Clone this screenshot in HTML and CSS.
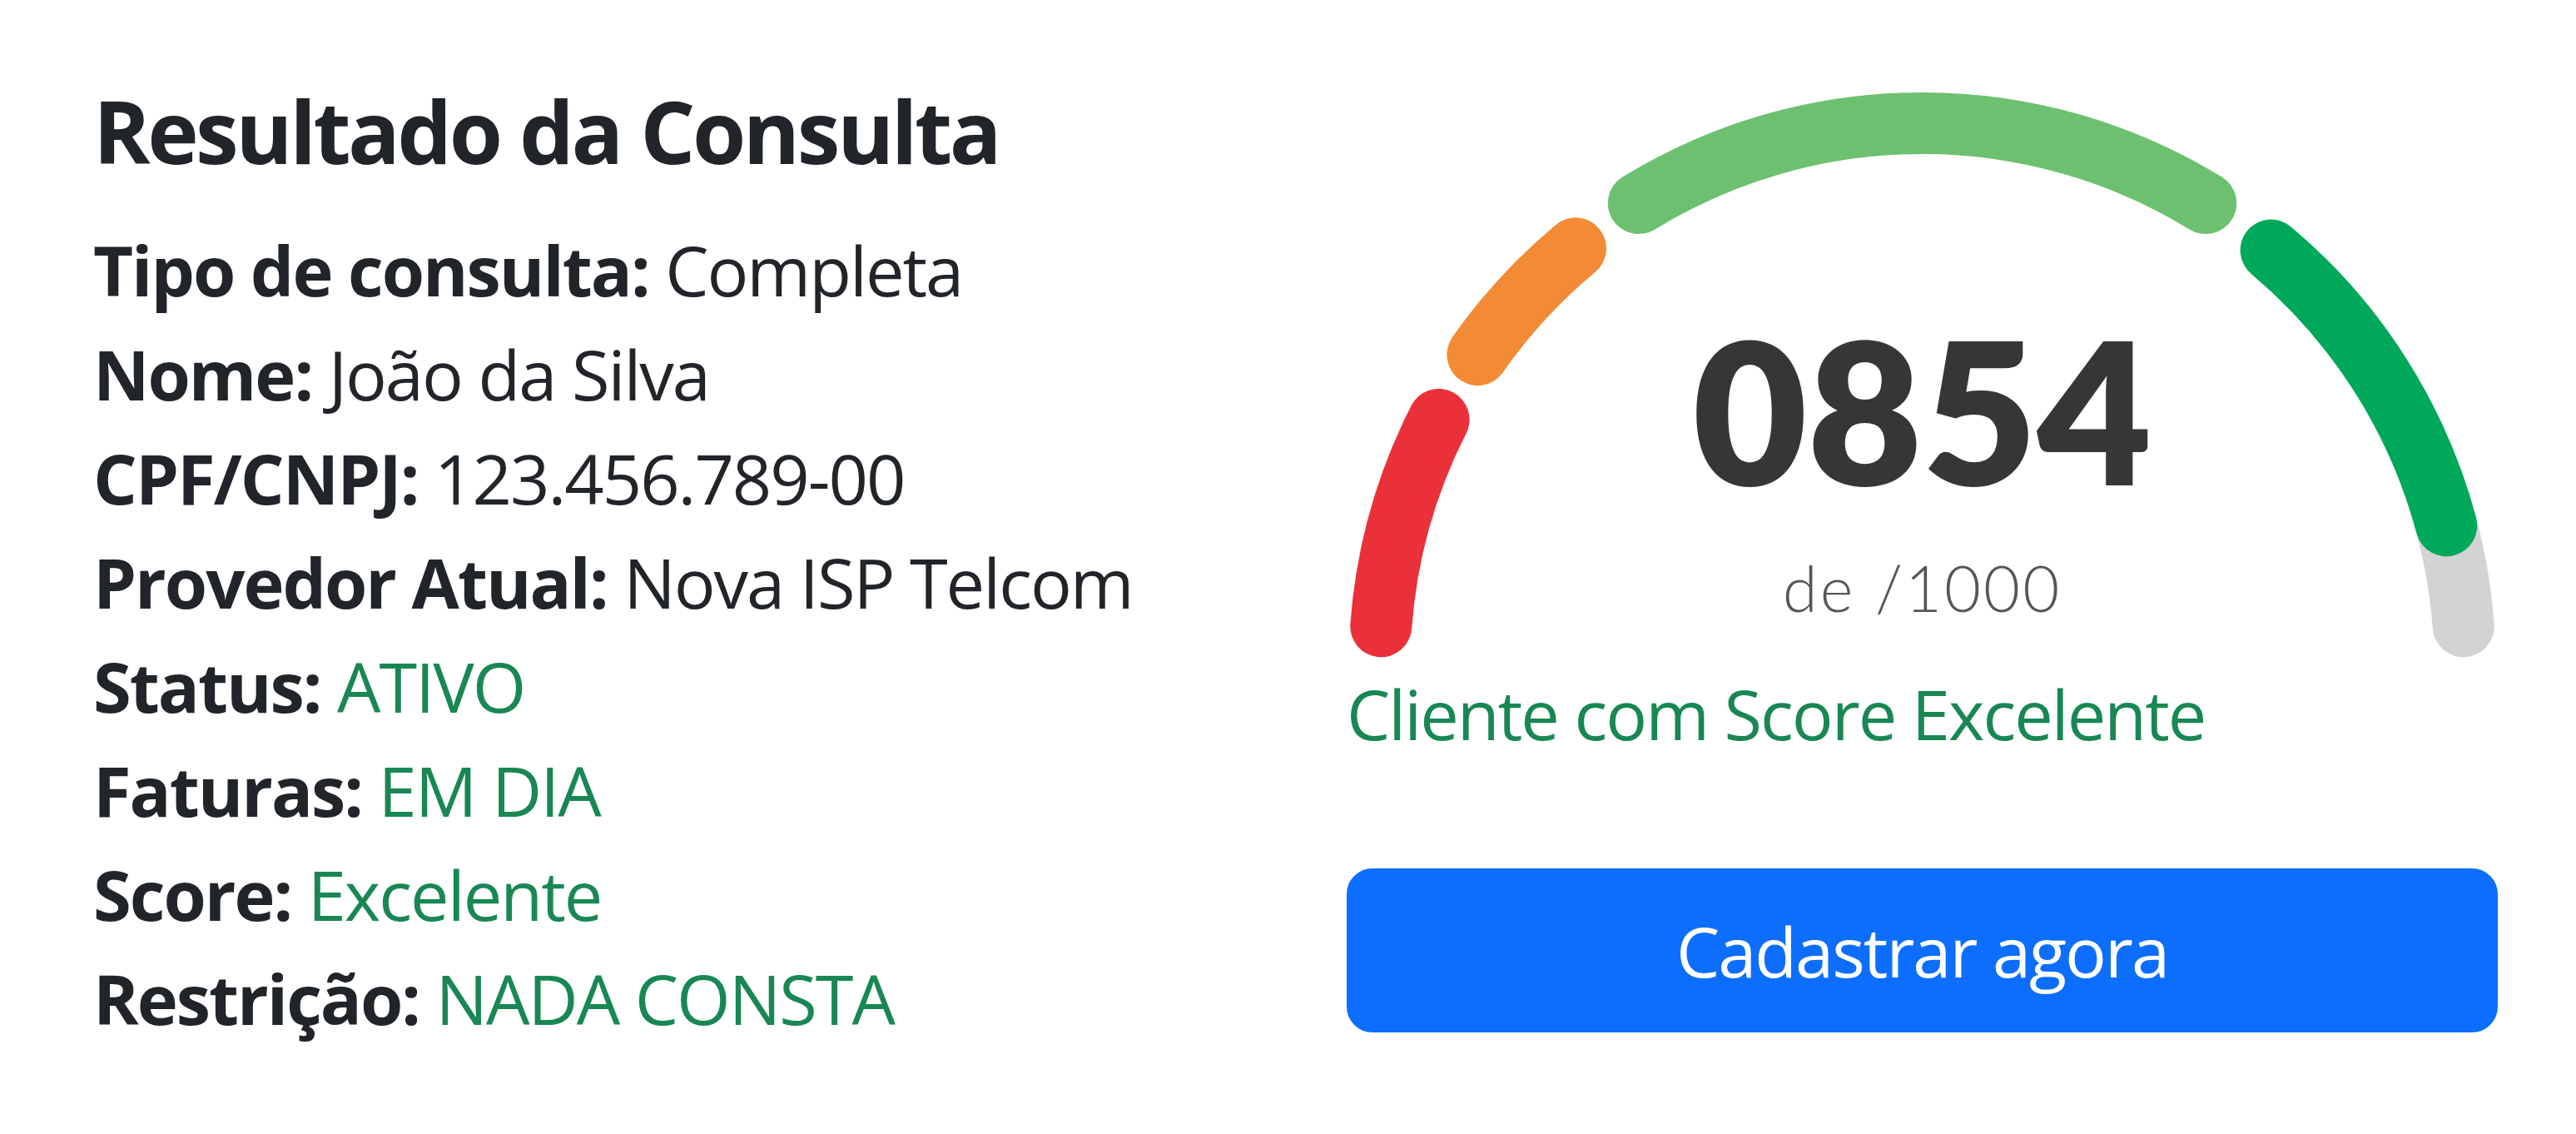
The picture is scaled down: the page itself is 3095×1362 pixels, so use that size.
FILE: index.html
```html
<!DOCTYPE html>
<html lang="pt-BR">
<head>
  <meta charset="UTF-8">
  <meta name="viewport" content="width=device-width, initial-scale=1.0">
  <title>Resultado da Consulta</title>
  <link rel="stylesheet" href="styles.css">
</head>
<body>
  <main class="result">
    <!-- dados do cliente -->
    <section class="details">
      <h5 class="details-title">Resultado da Consulta</h5>
      <p class="detail"><strong>Tipo de consulta:</strong> Completa</p>
      <p class="detail"><strong>Nome:</strong> João da Silva</p>
      <p class="detail"><strong>CPF/CNPJ:</strong> 123.456.789-00</p>
      <p class="detail"><strong>Provedor Atual:</strong> Nova ISP Telcom</p>
      <p class="detail"><strong>Status:</strong> <span class="text-success">ATIVO</span></p>
      <p class="detail"><strong>Faturas:</strong> <span class="text-success">EM DIA</span></p>
      <p class="detail"><strong>Score:</strong> <span class="text-success">Excelente</span></p>
      <p class="detail"><strong>Restrição:</strong> <span class="text-success">NADA CONSTA</span></p>
    </section>

    <!-- velocimetro do score -->
    <section class="score">
      <div class="gauge">
        <svg class="gauge-arc" width="1383" height="700" viewBox="0 0 1383 700">
          <path class="seg seg-track" d="M 1304.18 483.00 A 652 652 0 0 1 1341.75 658.25" />
          <path class="seg seg-red" d="M 41.25 658.25 A 652 652 0 0 1 110.56 410.00" />
          <path class="seg seg-orange" d="M 157.41 332.03 A 652 652 0 0 1 275.02 204.35" />
          <path class="seg seg-green" d="M 350.83 150.08 A 652 652 0 0 1 1032.17 150.08" />
          <path class="seg seg-dark" d="M 1110.60 206.54 A 652 652 0 0 1 1321.28 537.25" />
        </svg>
        <div class="gauge-readout">
          <div class="gauge-value">0854</div>
          <div class="gauge-max">de /1000</div>
        </div>
      </div>
      <p class="score-status text-success">Cliente com Score Excelente</p>
      <button class="btn btn-primary" type="button">Cadastrar agora</button>
    </section>
  </main>
</body>
</html>
```

FILE: styles.css
```css
* {
  margin: 0;
  padding: 0;
  box-sizing: border-box;
}
body {
  background-color: #fff;
  color: #212529;
  font-family: "Open Sans", "Noto Sans", sans-serif;
  font-size: 83px;
  line-height: 125px;
  letter-spacing: -2px;
}
.result {
  display: grid;
  grid-template-columns: 1fr 1383px;
  padding: 94px 94px 0 112px;
}
.details-title {
  font-size: 104px;
  line-height: 125px;
  font-weight: 700;
  letter-spacing: -3.5px;
  margin-bottom: 42px;
}
.detail strong {
  font-weight: 700;
}
.text-success {
  color: #198754;
}
.gauge {
  position: relative;
  height: 700px;
}
.gauge-arc {
  display: block;
  overflow: visible;
}
.seg {
  fill: none;
  stroke-width: 74;
  stroke-linecap: round;
}
.seg-track {
  stroke: #d1d3d4;
}
.seg-red {
  stroke: #ea3139;
}
.seg-orange {
  stroke: #f38a35;
}
.seg-green {
  stroke: #6dc06f;
}
.seg-dark {
  stroke: #00a85a;
}
.gauge-readout {
  position: absolute;
  top: 278px;
  left: 0;
  right: 0;
  text-align: center;
  font-family: Lato, "Open Sans", sans-serif;
  letter-spacing: 0;
}
.gauge-value {
  font-size: 238px;
  line-height: 238px;
  font-weight: 800;
  color: #383536;
}
.gauge-max {
  margin-top: 58px;
  font-size: 76px;
  line-height: 76px;
  font-weight: 300;
  letter-spacing: 3px;
  color: #555658;
}
.score-status {
  margin-bottom: 124px;
}
.btn {
  display: block;
  width: 100%;
  padding: 31px 62px;
  border: 5px solid #0d6efd;
  border-radius: 31px;
  font-family: inherit;
  font-size: 83px;
  line-height: 125px;
  letter-spacing: -2px;
  text-align: center;
}
.btn-primary {
  background-color: #0d6efd;
  color: #fff;
}
```
